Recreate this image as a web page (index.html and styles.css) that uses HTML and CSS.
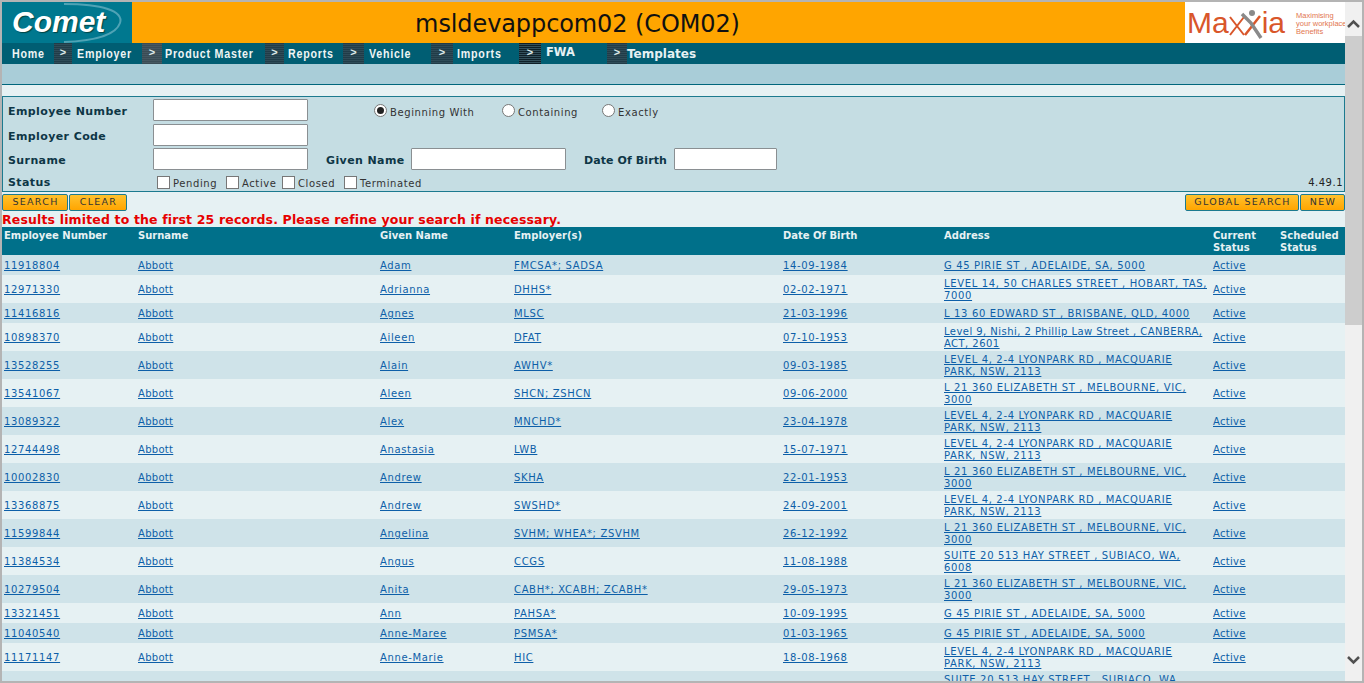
FILE: index.html

```html
<!doctype html>
<html>
<head>
<meta charset="utf-8">
<title>Comet</title>
<link rel="stylesheet" href="styles.css">
</head>
<body>
<div class="frame">
  <div class="main">
    <div class="top">
      <div class="logo">
        <svg class="swoosh" width="130" height="41" viewBox="0 0 130 41"><path d="M62 2C100 2 122 9 118 21C114 33 92 39 62 40" fill="none" stroke="#4fa3b5" stroke-width="2"/></svg>
        <span class="logoText">Comet</span>
      </div>
      <div class="server">msldevappcom02 (COM02)</div>
      <div class="maxxia">
        <span class="maxWord">Ma</span>
        <svg class="maxFig" width="36" height="32" viewBox="0 0 36 32">
          <path d="M1 9L15 27M15 9L1 27" fill="none" stroke="#d9562a" stroke-width="2"/>
          <path d="M31 8L16 27" fill="none" stroke="#d9562a" stroke-width="2.5"/>
          <circle cx="23" cy="5" r="3" fill="#8a8a8a"/>
          <path d="M13 6L22 15L32 30" fill="none" stroke="#8a8a8a" stroke-width="3.5"/>
        </svg>
        <span class="maxWord">ia</span>
        <span class="maxTag">Maximising<br>your workplace<br>Benefits</span>
      </div>
    </div>
    <div class="nav">
      <a class="navLink home"><span class="cond">Home</span></a>
      <span class="arrow a1">&gt;</span><a class="navLink w1"><span class="cond">Employer</span></a>
      <span class="arrow a2">&gt;</span><a class="navLink w2"><span class="cond">Product Master</span></a>
      <span class="arrow a3">&gt;</span><a class="navLink w3"><span class="cond">Reports</span></a>
      <span class="arrow a4">&gt;</span><a class="navLink w4"><span class="cond">Vehicle</span></a>
      <span class="arrow a5">&gt;</span><a class="navLink w5"><span class="cond">Imports</span></a>
      <span class="arrow a6">&gt;</span><a class="navPlain w6">FWA</a>
      <span class="arrow a7">&gt;</span><a class="navPlain">Templates</a>
    </div>
    <div class="band"></div>
    <div class="gap"></div>
    <form class="search">
      <div class="formRow r1">
        <label class="lbl">Employee Number</label><input class="txt t1" type="text">
        <span class="radios">
          <span class="radio on"></span><span class="opt o1">Beginning With</span>
          <span class="radio"></span><span class="opt o2">Containing</span>
          <span class="radio"></span><span class="opt">Exactly</span>
        </span>
      </div>
      <div class="formRow r2">
        <label class="lbl">Employer Code</label><input class="txt t1" type="text">
      </div>
      <div class="formRow r3">
        <label class="lbl">Surname</label><input class="txt t1" type="text">
        <label class="lbl2 given">Given Name</label><input class="txt t1" type="text">
        <label class="lbl2 dob">Date Of Birth</label><input class="txt t2" type="text">
      </div>
      <div class="formRow r4">
        <label class="lbl">Status</label>
        <span class="checks">
          <span class="check"></span><span class="opt c1">Pending</span>
          <span class="check"></span><span class="opt c2">Active</span>
          <span class="check"></span><span class="opt c3">Closed</span>
          <span class="check"></span><span class="opt">Terminated</span>
        </span>
        <span class="version">4.49.1</span>
      </div>
    </form>
    <div class="btnRow">
      <div class="btnGroup"><a class="btn b1">SEARCH</a><a class="btn b2">CLEAR</a></div>
      <div class="btnGroup"><a class="btn b3">GLOBAL SEARCH</a><a class="btn b4">NEW</a></div>
    </div>
    <div class="limit">Results limited to the first 25 records. Please refine your search if necessary.</div>
    <div class="results">
    <table class="grid">
      <colgroup>
        <col class="c-num"><col class="c-sur"><col class="c-giv"><col class="c-emp"><col class="c-dob"><col class="c-adr"><col class="c-cur"><col class="c-sch">
      </colgroup>
      <thead>
        <tr><th>Employee Number</th><th>Surname</th><th>Given Name</th><th>Employer(s)</th><th>Date Of Birth</th><th>Address</th><th>Current Status</th><th>Scheduled Status</th></tr>
      </thead>
      <tbody>
        <tr class="one"><td><a>11918804</a></td><td><a>Abbott</a></td><td><a>Adam</a></td><td><a>FMCSA*; SADSA</a></td><td><a>14-09-1984</a></td><td><a>G 45 PIRIE ST , ADELAIDE, SA, 5000</a></td><td><a>Active</a></td><td></td></tr>
        <tr class="two"><td><a>12971330</a></td><td><a>Abbott</a></td><td><a>Adrianna</a></td><td><a>DHHS*</a></td><td><a>02-02-1971</a></td><td><a>LEVEL 14, 50 CHARLES STREET , HOBART, TAS, 7000</a></td><td><a>Active</a></td><td></td></tr>
        <tr class="one"><td><a>11416816</a></td><td><a>Abbott</a></td><td><a>Agnes</a></td><td><a>MLSC</a></td><td><a>21-03-1996</a></td><td><a>L 13 60 EDWARD ST , BRISBANE, QLD, 4000</a></td><td><a>Active</a></td><td></td></tr>
        <tr class="two"><td><a>10898370</a></td><td><a>Abbott</a></td><td><a>Aileen</a></td><td><a>DFAT</a></td><td><a>07-10-1953</a></td><td><a class="tight">Level 9, Nishi, 2 Phillip Law Street , CANBERRA, ACT, 2601</a></td><td><a>Active</a></td><td></td></tr>
        <tr class="one"><td><a>13528255</a></td><td><a>Abbott</a></td><td><a>Alain</a></td><td><a>AWHV*</a></td><td><a>09-03-1985</a></td><td><a>LEVEL 4, 2-4 LYONPARK RD , MACQUARIE PARK, NSW, 2113</a></td><td><a>Active</a></td><td></td></tr>
        <tr class="two"><td><a>13541067</a></td><td><a>Abbott</a></td><td><a>Aleen</a></td><td><a>SHCN; ZSHCN</a></td><td><a>09-06-2000</a></td><td><a>L 21 360 ELIZABETH ST , MELBOURNE, VIC, 3000</a></td><td><a>Active</a></td><td></td></tr>
        <tr class="one"><td><a>13089322</a></td><td><a>Abbott</a></td><td><a>Alex</a></td><td><a>MNCHD*</a></td><td><a>23-04-1978</a></td><td><a>LEVEL 4, 2-4 LYONPARK RD , MACQUARIE PARK, NSW, 2113</a></td><td><a>Active</a></td><td></td></tr>
        <tr class="two"><td><a>12744498</a></td><td><a>Abbott</a></td><td><a>Anastasia</a></td><td><a>LWB</a></td><td><a>15-07-1971</a></td><td><a>LEVEL 4, 2-4 LYONPARK RD , MACQUARIE PARK, NSW, 2113</a></td><td><a>Active</a></td><td></td></tr>
        <tr class="one"><td><a>10002830</a></td><td><a>Abbott</a></td><td><a>Andrew</a></td><td><a>SKHA</a></td><td><a>22-01-1953</a></td><td><a>L 21 360 ELIZABETH ST , MELBOURNE, VIC, 3000</a></td><td><a>Active</a></td><td></td></tr>
        <tr class="two"><td><a>13368875</a></td><td><a>Abbott</a></td><td><a>Andrew</a></td><td><a>SWSHD*</a></td><td><a>24-09-2001</a></td><td><a>LEVEL 4, 2-4 LYONPARK RD , MACQUARIE PARK, NSW, 2113</a></td><td><a>Active</a></td><td></td></tr>
        <tr class="one"><td><a>11599844</a></td><td><a>Abbott</a></td><td><a>Angelina</a></td><td><a>SVHM; WHEA*; ZSVHM</a></td><td><a>26-12-1992</a></td><td><a>L 21 360 ELIZABETH ST , MELBOURNE, VIC, 3000</a></td><td><a>Active</a></td><td></td></tr>
        <tr class="two"><td><a>11384534</a></td><td><a>Abbott</a></td><td><a>Angus</a></td><td><a>CCGS</a></td><td><a>11-08-1988</a></td><td><a>SUITE 20 513 HAY STREET , SUBIACO, WA, 6008</a></td><td><a>Active</a></td><td></td></tr>
        <tr class="one"><td><a>10279504</a></td><td><a>Abbott</a></td><td><a>Anita</a></td><td><a>CABH*; XCABH; ZCABH*</a></td><td><a>29-05-1973</a></td><td><a>L 21 360 ELIZABETH ST , MELBOURNE, VIC, 3000</a></td><td><a>Active</a></td><td></td></tr>
        <tr class="two"><td><a>13321451</a></td><td><a>Abbott</a></td><td><a>Ann</a></td><td><a>PAHSA*</a></td><td><a>10-09-1995</a></td><td><a>G 45 PIRIE ST , ADELAIDE, SA, 5000</a></td><td><a>Active</a></td><td></td></tr>
        <tr class="one"><td><a>11040540</a></td><td><a>Abbott</a></td><td><a>Anne-Maree</a></td><td><a>PSMSA*</a></td><td><a>01-03-1965</a></td><td><a>G 45 PIRIE ST , ADELAIDE, SA, 5000</a></td><td><a>Active</a></td><td></td></tr>
        <tr class="two"><td><a>11171147</a></td><td><a>Abbott</a></td><td><a>Anne-Marie</a></td><td><a>HIC</a></td><td><a>18-08-1968</a></td><td><a>LEVEL 4, 2-4 LYONPARK RD , MACQUARIE PARK, NSW, 2113</a></td><td><a>Active</a></td><td></td></tr>
        <tr class="one"><td></td><td></td><td></td><td></td><td></td><td><a>SUITE 20 513 HAY STREET , SUBIACO, WA, 6008</a></td><td></td><td></td></tr>
      </tbody>
    </table>
    </div>
  </div>
  <div class="scroll">
    <div class="scrollBtn up"><svg width="13" height="9" viewBox="0 0 13 9"><path d="M1 8L6.5 2.5L12 8" fill="none" stroke="#505050" stroke-width="2.5"/></svg></div>
    <div class="thumb"></div>
    <div class="track"></div>
    <div class="scrollBtn down"><svg width="13" height="9" viewBox="0 0 13 9"><path d="M1 1L6.5 6.5L12 1" fill="none" stroke="#505050" stroke-width="2.5"/></svg></div>
  </div>
</div>
</body>
</html>
```

FILE: styles.css

```css
html, body { margin: 0; height: 100%; overflow: hidden; }
body { font-family: "DejaVu Sans", Verdana, sans-serif; font-size: 11px; background: #e6f1f3; }

.frame { display: flex; height: 683px; box-sizing: border-box; border: 2px solid #b4b4b4; }
.main { flex: 1; min-width: 0; display: flex; flex-direction: column; overflow: hidden; }

/* header */
.top { display: flex; height: 41px; background: #ffa500; flex: none; }
.logo { width: 130px; background: #00788f; position: relative; overflow: hidden; }
.swoosh { position: absolute; left: 0; top: 0; }
.logoText { display: block; font: italic bold 30px "Liberation Sans", sans-serif; color: #fff; padding: 3px 0 0 10px; text-shadow: 1px 1px 1px #044; }
.server { flex: 1; text-align: center; font: 24px/44px "DejaVu Sans", sans-serif; letter-spacing: -.1px; color: #111; padding-right: 162px; }
.maxxia { width: 160px; background: #fff; display: flex; align-items: center; padding-left: 2px; box-sizing: border-box; overflow: hidden; }
.maxWord { font: 30px/40px "Liberation Sans", sans-serif; color: #d9562a; }
.maxFig { margin: 2px -3px 0 0; flex: none; }
.maxTag { font: 7.5px/8px "Liberation Sans", sans-serif; color: #e2764f; margin: 2px 0 0 11px; white-space: nowrap; }

/* nav */
.nav { display: flex; align-items: center; height: 21px; background: #005e73; flex: none; white-space: nowrap; }
.navLink { font: bold 13.5px "Liberation Sans", sans-serif; letter-spacing: 1px; color: #eef4f4; }
.cond { display: inline-block; transform: scaleX(.79); transform-origin: left center; }
.navPlain { font: bold 12px "DejaVu Sans", sans-serif; color: #e6f1f3; }
.home { margin-left: 10px; width: 42px; }
.arrow { height: 21px; font: bold 11px/18px "Liberation Sans", sans-serif; text-align: center; color: #dfeaea; box-sizing: border-box;
  background: repeating-linear-gradient(#213c48 0 1px, #2f4c58 1px 2px); }
.a1 { width: 18px; }
.a2 { width: 20px; background: repeating-linear-gradient(#3a4c55 0 1px, #465861 1px 2px); }
.a3 { width: 19px; }
.a4 { width: 21px; }
.a5 { width: 22px; }
.a6 { width: 22px; background: repeating-linear-gradient(#0e1f27 0 1px, #33505b 1px 2px); }
.a7 { width: 20px; }
.w1 { width: 65px; margin-left: 5px; }
.w2 { width: 100px; margin-left: 3px; }
.w3 { width: 55px; margin-left: 4px; }
.w4 { width: 62px; margin-left: 5px; }
.w5 { width: 62px; margin-left: 4px; }
.w6 { width: 61px; margin-left: 5px; margin-top: -3px; font-size: 11.5px; }

.band { height: 20px; background: #a9cdd8; border-bottom: 1px solid #00667c; flex: none; }
.gap { height: 11px; flex: none; }

/* search form */
.search { border: 1px solid #1c7a8f; height: 96px; box-sizing: border-box; background: #c5dde3; padding: 1px 0 0 5px; flex: none; }
.formRow { display: flex; align-items: center; }
.r1 { height: 24px; }
.r2 { height: 26px; }
.r3 { height: 22px; }
.r4 { height: 18px; padding-top: 3px; }
.lbl { width: 145px; font-weight: bold; color: #0e3646; letter-spacing: .4px; margin-top: 2px; }
.lbl2 { font-weight: bold; color: #0e3646; letter-spacing: .4px; margin-top: 2px; }
.r4 .lbl { margin-top: 0; }
.given { margin-left: 18px; width: 85px; }
.dob { margin-left: 18px; width: 90px; letter-spacing: .1px; }
.txt { box-sizing: border-box; height: 22px; border: 1px solid #8a8f92; background: #fff; padding: 0; border-radius: 1px; }
.t1 { width: 155px; }
.t2 { width: 103px; }
.radios { display: flex; align-items: center; margin: 2px 0 0 66px; }
.radio { width: 13px; height: 13px; box-sizing: border-box; border: 1px solid #777; border-radius: 50%; background: #fff; margin: -1px 3px 0 0; position: relative; }
.radio.on::after { content: ""; position: absolute; left: 2px; top: 2px; width: 7px; height: 7px; border-radius: 50%; background: #222; }
.opt { font-size: 10px; color: #333; letter-spacing: .6px; margin-top: 3px; }
.o1 { width: 112px; }
.o2 { width: 84px; }
.checks { display: flex; align-items: center; margin-left: 4px; }
.check { width: 13px; height: 13px; box-sizing: border-box; border: 1px solid #777; background: #fff; margin-right: 3px; }
.c1 { width: 53px; }
.c2 { width: 40px; }
.c3 { width: 46px; }
.version { margin-left: auto; margin-right: 1px; font-size: 10px; color: #222; letter-spacing: .5px; }

/* buttons */
.btnRow { display: flex; justify-content: space-between; padding-top: 2px; height: 17px; flex: none; }
.btnGroup { display: flex; gap: 1px; }
.btn { box-sizing: border-box; height: 17px; border: 1px solid #1c7a8f; border-radius: 2px; font-size: 9.5px; line-height: 14px; letter-spacing: 1.3px; text-indent: 1px; text-align: center; color: #333;
  background: linear-gradient(#ffc22e, #ffa500); }
.b1 { width: 66px; }
.b2 { width: 58px; }
.b3 { width: 114px; }
.b4 { width: 45px; }

.limit { color: #e60000; font-weight: bold; font-size: 12.5px; letter-spacing: .15px; line-height: 15px; padding-top: 1px; flex: none; }

/* results */
.results { flex: 1; min-height: 0; overflow: hidden; }
.grid { border-collapse: collapse; table-layout: fixed; width: 1343px; }
.c-num { width: 134px; }
.c-sur { width: 242px; }
.c-giv { width: 134px; }
.c-emp { width: 269px; }
.c-dob { width: 161px; }
.c-adr { width: 269px; }
.c-cur { width: 67px; }
.c-sch { width: 67px; }
.grid th { background: #00708a; color: #e6f1f3; font-size: 10px; line-height: 12px; text-align: left; vertical-align: top; padding: 3px 2px 0 2px; height: 28px; box-sizing: border-box; }
.grid td { font-size: 10px; line-height: 12px; padding: 3px 4px 1px 2px; height: 20px; box-sizing: border-box; letter-spacing: .65px; vertical-align: middle; }
.grid td:nth-child(2), .grid td:nth-child(7) { letter-spacing: .3px; }
.one td { background: #cfe3e9; }
.two td { background: #e6f1f3; }
.grid a { color: #0d5fa8; text-decoration: underline; }
.grid a.tight { letter-spacing: .45px; }

/* scrollbar */
.scroll { width: 17px; background: #f0f0f0; display: flex; flex-direction: column; flex: none; }
.scrollBtn { display: flex; align-items: center; justify-content: center; flex: none; box-sizing: border-box; }
.up { height: 34px; padding-top: 8px; }
.down { height: 31px; padding-bottom: 11px; }
.thumb { height: 289px; background: #cdcdcd; flex: none; }
.track { flex: 1; }
```
